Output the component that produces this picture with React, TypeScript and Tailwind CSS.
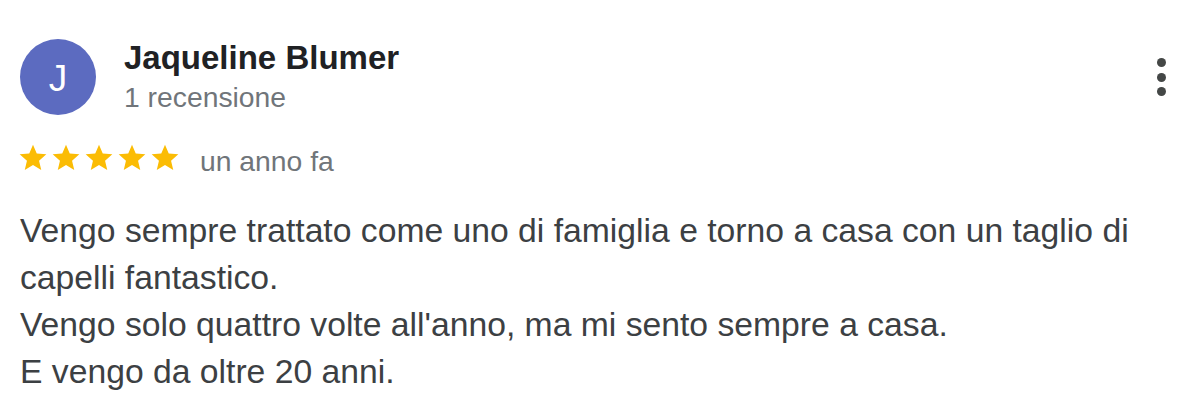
import React from "react";

const Star = () => (
  <svg width="32" height="32" viewBox="0 0 24 24" className="shrink-0">
    <path
      fill="#fbbc04"
      d="M12 17.27L18.18 21l-1.64-7.03L22 9.24l-7.19-.61L12 2 9.19 8.63 2 9.24l5.46 4.73L5.82 21z"
    />
  </svg>
);

export default function App() {
  return (
    <div
      className="w-[1200px] h-[410px] bg-white overflow-hidden pl-[20px] pt-[39px]"
      style={{ fontFamily: '"Liberation Sans", Arial, sans-serif' }}
    >
      <div className="flex items-start">
        <div className="w-[76px] h-[76px] rounded-full bg-[#5c6bc0] flex items-center justify-center text-white text-[37px] leading-none shrink-0">
          <span className="mt-[2px]">J</span>
        </div>
        <div className="ml-[28px] flex flex-col">
          <div className="text-[33px] leading-[38px] font-bold text-[#202124]">
            Jaqueline Blumer
          </div>
          <div className="mt-[2px] text-[28.3px] leading-[36px] text-[#70757a]">
            1 recensione
          </div>
        </div>
        <div className="ml-auto mr-[34px] mt-[19px] flex flex-col gap-[5.5px]">
          <div className="w-[9px] h-[9px] rounded-full bg-[#444746]" />
          <div className="w-[9px] h-[9px] rounded-full bg-[#444746]" />
          <div className="w-[9px] h-[9px] rounded-full bg-[#444746]" />
        </div>
      </div>

      <div className="mt-[27px] flex items-start">
        <div className="ml-[-3px] flex gap-[1px]">
          <Star />
          <Star />
          <Star />
          <Star />
          <Star />
        </div>
        <div className="ml-[19px] mt-[2px] text-[28.3px] leading-[34px] text-[#70757a]">
          un anno fa
        </div>
      </div>

      <div className="mt-[29px] text-[33.7px] leading-[47px] text-[#3c4043] whitespace-nowrap">
        Vengo sempre trattato come uno di famiglia e torno a casa con un taglio di
        <br />
        capelli fantastico.
        <br />
        Vengo solo quattro volte all'anno, ma mi sento sempre a casa.
        <br />
        E vengo da oltre 20 anni.
      </div>
    </div>
  );
}
